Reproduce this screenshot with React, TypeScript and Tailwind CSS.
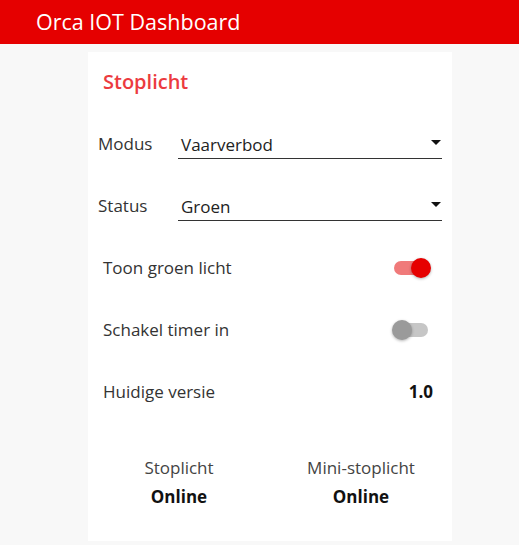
import { useState } from "react";

const font = { fontFamily: '"Open Sans", "Noto Sans", sans-serif' };

function Select({ label, value }: { label: string; value: string }) {
  return (
    <div className="flex items-center h-[62px] pl-[10px] pr-[10px]">
      <span className="w-[80px] text-[17px] text-[#333]">{label}</span>
      <div className="flex-1 flex items-center justify-between border-b border-[#333] h-[28px] mt-[2px] pl-[3px]">
        <span className="text-[17px] text-[#222]">{value}</span>
        <span className="w-0 h-0 border-l-[5px] border-r-[5px] border-t-[5px] border-l-transparent border-r-transparent border-t-[#111] mr-[1px] mb-[4px]" />
      </div>
    </div>
  );
}

function Toggle({ on, onClick }: { on: boolean; onClick: () => void }) {
  return (
    <button onClick={onClick} className="relative w-[34px] h-[14px] mr-[5px]">
      <span className={`absolute inset-0 rounded-full ${on ? "bg-[#f07a7a]" : "bg-[#c6c6c6]"}`} />
      <span
        className={`absolute top-[-3px] w-[20px] h-[20px] rounded-full shadow-[0_1px_3px_rgba(0,0,0,0.3)] ${
          on ? "left-[17px] bg-[#e60000]" : "left-[-2px] bg-[#9a9a9a]"
        }`}
      />
    </button>
  );
}

export default function App() {
  const [groen, setGroen] = useState(true);
  const [timer, setTimer] = useState(false);

  return (
    <div className="min-h-screen bg-[#f8f8f8]" style={font}>
      <div className="h-[44px] bg-[#e50000] text-white text-[21.5px] flex items-center pl-[36px]">
        Orca IOT Dashboard
      </div>

      <div className="ml-[88px] w-[364px] mt-[8px] bg-white pb-[32px]">
        <h2 className="text-[20px] font-semibold text-[#ec3b3f] pl-[15px] pt-[15px] h-[60px]">Stoplicht</h2>

        <div className="pt-[1px]">
          <Select label="Modus" value="Vaarverbod" />
          <Select label="Status" value="Groen" />
        </div>

        <div className="flex items-center justify-between h-[62px] pl-[15px] pr-[19px]">
          <span className="text-[17px] text-[#333]">Toon groen licht</span>
          <Toggle on={groen} onClick={() => setGroen(!groen)} />
        </div>
        <div className="flex items-center justify-between h-[62px] pl-[15px] pr-[19px]">
          <span className="text-[17px] text-[#333]">Schakel timer in</span>
          <Toggle on={timer} onClick={() => setTimer(!timer)} />
        </div>
        <div className="flex items-center justify-between h-[62px] pl-[15px] pr-[19px]">
          <span className="text-[17px] text-[#333]">Huidige versie</span>
          <span className="text-[17px] font-bold text-[#111]">1.0</span>
        </div>

        <div className="grid grid-cols-2 mt-[32px] text-[17px] text-center">
          <div>
            <div className="text-[#444]">Stoplicht</div>
            <div className="font-bold text-[#111] mt-[3px]">Online</div>
          </div>
          <div>
            <div className="text-[#444]">Mini-stoplicht</div>
            <div className="font-bold text-[#111] mt-[3px]">Online</div>
          </div>
        </div>
      </div>
    </div>
  );
}
